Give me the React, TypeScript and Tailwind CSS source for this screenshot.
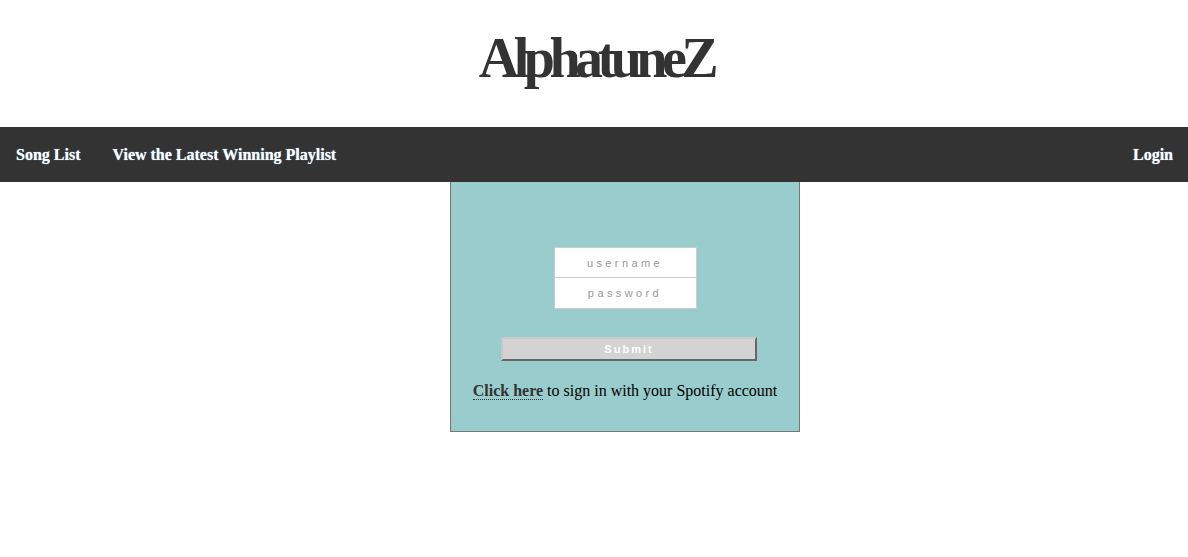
export default function App() {
  return (
    <div className="min-h-[557px] bg-white font-['Liberation_Serif',serif]">
      {/* Title */}
      <header className="h-[127px] flex justify-center pt-[26px]">
        <h1 className="text-[56px] leading-[64px] font-bold text-[#333] tracking-[-5.5px] pl-[4px]">AlphatuneZ</h1>
      </header>

      {/* Nav */}
      <nav className="h-[55px] bg-[#333] flex items-center pl-4 pr-[15px] text-white font-bold text-base [text-shadow:0_0_1px_#9cf]">
        <a className="mr-8">Song List</a>
        <a>View the Latest Winning Playlist</a>
        <a className="ml-auto">Login</a>
      </nav>

      {/* Login panel */}
      <div className="ml-[450px] w-[350px] h-[250px] bg-[#99cccc] border border-[#777] border-t-0 flex flex-col items-center pt-[65px]">
        <div className="flex flex-col font-['Liberation_Sans',sans-serif]">
          <input
            placeholder="username"
            className="w-[143px] h-[31px] bg-white border border-[#ccc] text-center text-[11px] tracking-[3.4px] placeholder:text-[#999] outline-none"
          />
          <input
            type="password"
            placeholder="password"
            className="w-[143px] h-[31px] bg-white border border-[#ccc] border-t-0 text-center text-[11px] tracking-[3.4px] placeholder:text-[#999] outline-none"
          />
        </div>
        <button className="mt-[28px] ml-[8px] w-[256px] h-[24px] bg-[#d3d3d3] border-2 border-t-[#c8c8c8] border-l-[#c8c8c8] border-b-[#666] border-r-[#666] text-white font-['Liberation_Sans',sans-serif] font-bold text-[11px] tracking-[2px]">
          Submit
        </button>
        <p className="mt-[18px] text-base text-black">
          <a className="font-bold text-[#333] border-b border-dotted border-[#333]">Click here</a> to sign in with your Spotify account
        </p>
      </div>
    </div>
  )
}
